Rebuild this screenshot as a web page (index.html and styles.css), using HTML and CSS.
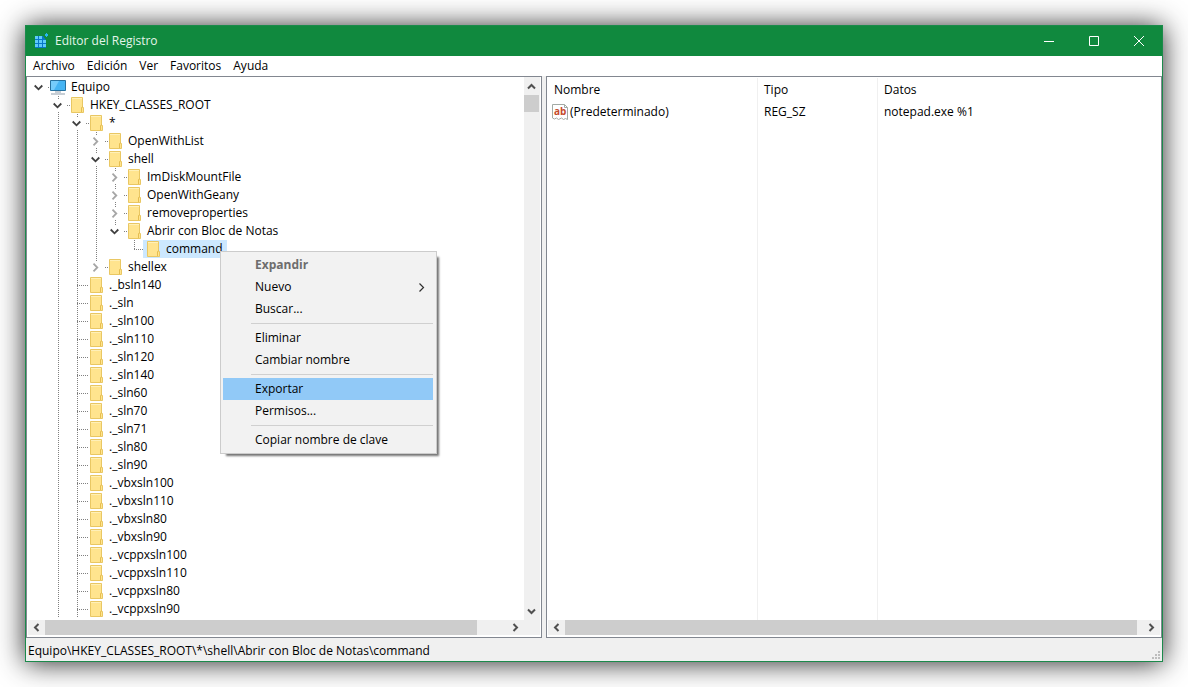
FILE: index.html
```html
<!DOCTYPE html>
<html lang="es">
<head>
<meta charset="utf-8">
<meta name="viewport" content="width=device-width, initial-scale=1">
<title>Editor del Registro</title>
<link rel="stylesheet" href="styles.css">
</head>
<body>
<svg class="defs" aria-hidden="true">
  <symbol id="folder" viewBox="0 0 13 16">
    <path d="M.5.5h11v10h1v5H.5z" fill="#ffe48e" stroke="#e9c763"/>
    <path d="M1 1h10v1H1z" fill="#fff0b8"/>
    <path d="M10.500 15v-4.500l1.500-1" fill="none" stroke="#e6be50"/>
  </symbol>
  <symbol id="down" viewBox="0 0 9 9"><path d="M.7 2.500l3.800 3.800 3.800-3.800" fill="none" stroke="#404040" stroke-width="1.800"/></symbol>
  <symbol id="closed" viewBox="0 0 9 9"><path d="M2.500.7l3.800 3.800-3.800 3.800" fill="none" stroke="#a6a6a6" stroke-width="1.800"/></symbol>
  <symbol id="arrow" viewBox="0 0 9 9"><path d="M2.500 1l3.500 3.500L2.500 8" fill="none" stroke="#505050" stroke-width="2"/></symbol>
</svg>
<main class="window">
  <header class="titlebar">
    <svg class="app-icon" viewBox="0 0 16 16" aria-hidden="true">
      <path d="M2 3h8l3 4v8H2z" fill="#0878c8"/>
      <g fill="#5fcbfa"><path d="M2 3h3v3H2zM6 3h3v3H6zM2 7h3v3H2zM6 7h3v3H6zM10 7h3v3h-3zM2 11h3v3H2zM6 11h3v3H6zM10 11h3v3h-3z"/><path d="M12 1h1V0h1v1h1v2h-1v1h-1V3h-1z" fill="#29b6ee"/></g>
    </svg>
    <h1 class="title">Editor del Registro</h1>
    <div class="controls">
      <button class="control" aria-label="Minimizar"><svg viewBox="0 0 10 10"><path d="M0 5.500h10"/></svg></button>
      <button class="control" aria-label="Maximizar"><svg viewBox="0 0 10 10"><path d="M.5.5h9v9h-9z"/></svg></button>
      <button class="control" aria-label="Cerrar"><svg viewBox="0 0 10 10"><path d="M0 0l10 10M10 0L0 10"/></svg></button>
    </div>
  </header>
  <nav class="menubar">
    <button class="menu">Archivo</button><button class="menu">Edición</button><button class="menu">Ver</button><button class="menu">Favoritos</button><button class="menu">Ayuda</button>
  </nav>
  <div class="panes">
    <section class="pane tree-pane" aria-label="Claves">
      <div class="tree-view">
        <ul class="tree root">
          <li>
            <div class="row"><button class="toggle" aria-label="Contraer Equipo"><svg><use href="#down"/></svg></button><span class="item"><svg class="computer" viewBox="0 0 16 15" aria-hidden="true"><path d="M.5.5h15v10H.5z" fill="#45b4f3" stroke="#26719f"/><path d="M1 1h8L4 10H1z" fill="#75ccfb"/><path d="M5 12h6M1 14h14" stroke="#8f9dab"/></svg>Equipo</span></div>
            <ul class="tree">
              <li class="continues">
                <div class="row"><button class="toggle" aria-label="Contraer HKEY_CLASSES_ROOT"><svg><use href="#down"/></svg></button><span class="item"><svg class="folder"><use href="#folder"/></svg>HKEY_CLASSES_ROOT</span></div>
                <ul class="tree">
                  <li>
                    <div class="row"><button class="toggle" aria-label="Contraer *"><svg><use href="#down"/></svg></button><span class="item"><svg class="folder"><use href="#folder"/></svg>*</span></div>
                    <ul class="tree">
                      <li><div class="row"><button class="toggle" aria-label="Expandir OpenWithList"><svg><use href="#closed"/></svg></button><span class="item"><svg class="folder"><use href="#folder"/></svg>OpenWithList</span></div></li>
                      <li>
                        <div class="row"><button class="toggle" aria-label="Contraer shell"><svg><use href="#down"/></svg></button><span class="item"><svg class="folder"><use href="#folder"/></svg>shell</span></div>
                        <ul class="tree">
                          <li><div class="row"><button class="toggle" aria-label="Expandir ImDiskMountFile"><svg><use href="#closed"/></svg></button><span class="item"><svg class="folder"><use href="#folder"/></svg>ImDiskMountFile</span></div></li>
                          <li><div class="row"><button class="toggle" aria-label="Expandir OpenWithGeany"><svg><use href="#closed"/></svg></button><span class="item"><svg class="folder"><use href="#folder"/></svg>OpenWithGeany</span></div></li>
                          <li><div class="row"><button class="toggle" aria-label="Expandir removeproperties"><svg><use href="#closed"/></svg></button><span class="item"><svg class="folder"><use href="#folder"/></svg>removeproperties</span></div></li>
                          <li>
                            <div class="row"><button class="toggle" aria-label="Contraer Abrir con Bloc de Notas"><svg><use href="#down"/></svg></button><span class="item"><svg class="folder"><use href="#folder"/></svg>Abrir con Bloc de Notas</span></div>
                            <ul class="tree">
                              <li><div class="row leaf"><span class="item selected"><svg class="folder"><use href="#folder"/></svg>command</span></div></li>
                            </ul>
                          </li>
                        </ul>
                      </li>
                      <li><div class="row"><button class="toggle" aria-label="Expandir shellex"><svg><use href="#closed"/></svg></button><span class="item"><svg class="folder"><use href="#folder"/></svg>shellex</span></div></li>
                    </ul>
                  </li>
                  <li><div class="row leaf"><span class="item"><svg class="folder"><use href="#folder"/></svg>._bsln140</span></div></li>
                  <li><div class="row leaf"><span class="item"><svg class="folder"><use href="#folder"/></svg>._sln</span></div></li>
                  <li><div class="row leaf"><span class="item"><svg class="folder"><use href="#folder"/></svg>._sln100</span></div></li>
                  <li><div class="row leaf"><span class="item"><svg class="folder"><use href="#folder"/></svg>._sln110</span></div></li>
                  <li><div class="row leaf"><span class="item"><svg class="folder"><use href="#folder"/></svg>._sln120</span></div></li>
                  <li><div class="row leaf"><span class="item"><svg class="folder"><use href="#folder"/></svg>._sln140</span></div></li>
                  <li><div class="row leaf"><span class="item"><svg class="folder"><use href="#folder"/></svg>._sln60</span></div></li>
                  <li><div class="row leaf"><span class="item"><svg class="folder"><use href="#folder"/></svg>._sln70</span></div></li>
                  <li><div class="row leaf"><span class="item"><svg class="folder"><use href="#folder"/></svg>._sln71</span></div></li>
                  <li><div class="row leaf"><span class="item"><svg class="folder"><use href="#folder"/></svg>._sln80</span></div></li>
                  <li><div class="row leaf"><span class="item"><svg class="folder"><use href="#folder"/></svg>._sln90</span></div></li>
                  <li><div class="row leaf"><span class="item"><svg class="folder"><use href="#folder"/></svg>._vbxsln100</span></div></li>
                  <li><div class="row leaf"><span class="item"><svg class="folder"><use href="#folder"/></svg>._vbxsln110</span></div></li>
                  <li><div class="row leaf"><span class="item"><svg class="folder"><use href="#folder"/></svg>._vbxsln80</span></div></li>
                  <li><div class="row leaf"><span class="item"><svg class="folder"><use href="#folder"/></svg>._vbxsln90</span></div></li>
                  <li><div class="row leaf"><span class="item"><svg class="folder"><use href="#folder"/></svg>._vcppxsln100</span></div></li>
                  <li><div class="row leaf"><span class="item"><svg class="folder"><use href="#folder"/></svg>._vcppxsln110</span></div></li>
                  <li><div class="row leaf"><span class="item"><svg class="folder"><use href="#folder"/></svg>._vcppxsln80</span></div></li>
                  <li class="continues"><div class="row leaf"><span class="item"><svg class="folder"><use href="#folder"/></svg>._vcppxsln90</span></div></li>
                </ul>
              </li>
            </ul>
          </li>
        </ul>
      </div>
      <div class="scrollbar vertical">
        <button class="scroll-button up" aria-label="Subir"><svg><use href="#arrow"/></svg></button>
        <div class="thumb"></div>
        <button class="scroll-button end down" aria-label="Bajar"><svg><use href="#arrow"/></svg></button>
      </div>
      <div class="scrollbar horizontal">
        <button class="scroll-button left" aria-label="Izquierda"><svg><use href="#arrow"/></svg></button>
        <div class="thumb tree-thumb"></div>
        <button class="scroll-button end" aria-label="Derecha"><svg><use href="#arrow"/></svg></button>
      </div>
      <div class="corner"></div>
    </section>
    <section class="pane value-pane" aria-label="Valores">
      <div class="value-view">
        <table class="values">
          <thead><tr><th class="name">Nombre</th><th class="type">Tipo</th><th>Datos</th></tr></thead>
          <tbody>
            <tr><td class="name"><span class="value-name"><svg class="string-icon" viewBox="0 0 16 16" aria-hidden="true"><path d="M.5.5h12l3 3v12l-2-1-2 1-2-1.500-3 1.500-2-1.500-2 1-2-1z" fill="#fff" stroke="#a3aaa5"/><path d="M12.500.5v3h3" fill="none" stroke="#a3aaa5"/><text x="2" y="11" class="ab">ab</text></svg>(Predeterminado)</span></td><td>REG_SZ</td><td>notepad.exe %1</td></tr>
            <tr class="rest"><td></td><td></td><td></td></tr>
          </tbody>
        </table>
      </div>
      <div class="scrollbar horizontal">
        <button class="scroll-button left" aria-label="Izquierda"><svg><use href="#arrow"/></svg></button>
        <div class="thumb value-thumb"></div>
        <button class="scroll-button end" aria-label="Derecha"><svg><use href="#arrow"/></svg></button>
      </div>
    </section>
  </div>
  <footer class="status"><span>Equipo\HKEY_CLASSES_ROOT\*\shell\Abrir con Bloc de Notas\command</span>
    <svg class="grip" viewBox="0 0 8 8" aria-hidden="true"><path d="M6 0h2v2H6zM3 3h2v2H3zM6 3h2v2H6zM0 6h2v2H0zM3 6h2v2H3zM6 6h2v2H6z"/></svg>
  </footer>
</main>
<div class="context" role="menu">
  <button class="command default" role="menuitem" disabled>Expandir</button>
  <button class="command" role="menuitem">Nuevo<svg class="submenu" viewBox="0 0 9 9"><path d="M2.500.5l4 4-4 4" fill="none" stroke="#303030" stroke-width="1.200"/></svg></button>
  <button class="command" role="menuitem">Buscar...</button>
  <hr class="separator">
  <button class="command" role="menuitem">Eliminar</button>
  <button class="command" role="menuitem">Cambiar nombre</button>
  <hr class="separator">
  <button class="command active" role="menuitem">Exportar</button>
  <button class="command" role="menuitem">Permisos...</button>
  <hr class="separator">
  <button class="command" role="menuitem">Copiar nombre de clave</button>
</div>
</body>
</html>
```
FILE: styles.css
```css
* { box-sizing: border-box; }

body {
  margin: 0;
  height: 100vh;
  padding: 25px;
  background: #fff;
  color: #000;
  font: 12px/18px "Open Sans", "Noto Sans", sans-serif;
  overflow: hidden;
}

button {
  border: 0;
  padding: 0;
  background: none;
  color: inherit;
  font: inherit;
}

svg { display: block; flex: none; }
.defs { position: absolute; width: 0; height: 0; }

.window {
  height: 100%;
  display: flex;
  flex-direction: column;
  border: 1px solid #1b8a4b;
  background: #f0f0f0;
  box-shadow: 0 1px 26px rgba(0, 0, 0, .85);
}

.titlebar {
  height: 30px;
  flex: none;
  display: flex;
  align-items: center;
  padding-left: 7px;
  background: #10893e;
  color: #e4f5ea;
}
.app-icon { width: 16px; height: 16px; }
.title { margin: 0 0 0 6px; font-size: 12px; font-weight: 400; }
.controls { display: flex; margin-left: auto; padding-right: 1px; }
.control { width: 45px; height: 28px; display: grid; place-items: center; }
.control svg { width: 10px; height: 10px; fill: none; stroke: #fff; }

.menubar { display: flex; flex: none; height: 20px; padding-left: 1px; background: #fff; }
.menu { padding: 0 6px; line-height: 20px; }

.panes {
  flex: 1;
  min-height: 0;
  display: grid;
  grid-template-columns: 516fr 616fr;
  column-gap: 4px;
}
.pane {
  min-width: 0;
  min-height: 0;
  display: grid;
  grid-template-rows: minmax(0, 1fr) 15px;
  padding: 0 1px 2px;
  border: 1px solid #828790;
  background: #fff;
}
.tree-pane { grid-template-columns: minmax(0, 1fr) 16px; }
.tree-view { overflow: hidden; padding-top: 1px; }

.tree { list-style: none; margin: 0; padding: 0 0 0 19px; }
.root { padding-left: 1px; }
.tree li {
  background: repeating-linear-gradient(#808080 0 1px, transparent 1px 2px) 10px 0 / 1px 100% no-repeat;
}
.tree li:last-child:not(.continues) { background-size: 1px 10px; }
.root > li { background: none; }
.row { display: flex; align-items: center; height: 18px; white-space: nowrap; }
.leaf {
  padding-left: 19px;
  background: repeating-linear-gradient(90deg, #808080 0 1px, transparent 1px 2px) 10px 9px / 12px 1px no-repeat;
}
.toggle { width: 19px; height: 12px; display: grid; place-items: center; background: #fff; }
.toggle svg { width: 9px; height: 9px; }
.toggle + .item {
  background: repeating-linear-gradient(90deg, #808080 0 1px, transparent 1px 2px) 0 9px / 3px 1px no-repeat;
}
.item { display: flex; align-items: center; height: 18px; padding: 0 4px; }
.selected { background: #cce8ff; }
.folder { width: 13px; height: 16px; margin-right: 6px; }
.computer { width: 16px; height: 15px; margin: 0 5px 0 -2px; }

.scrollbar { display: flex; background: #f0f0f0; }
.vertical { flex-direction: column; padding-top: 1px; }
.scroll-button { width: 17px; height: 15px; flex: none; display: grid; place-items: center; }
.vertical .scroll-button { width: 15px; height: 17px; }
.scroll-button svg { width: 9px; height: 9px; }
.up svg { transform: rotate(-90deg); }
.down svg { transform: rotate(90deg); }
.left svg { transform: rotate(180deg); }
.end { margin-left: auto; }
.vertical .end { margin: auto 0 0; }
.thumb { background: #cdcdcd; }
.vertical .thumb { width: 15px; height: 17px; }
.tree-thumb { width: 87%; }
.value-thumb { flex: 1; margin-right: 6px; }
.corner { background: #f0f0f0; }

.value-view { padding-top: 1px; min-height: 0; }
.values {
  width: 100%;
  height: 100%;
  table-layout: fixed;
  border-collapse: separate;
  border-spacing: 0;
}
.values th, .values td {
  height: 20px;
  padding: 0 6px;
  border-right: 1px solid #f0f0f0;
  font-weight: 400;
  text-align: left;
  white-space: nowrap;
}
.values th { height: 24px; }
.values th:last-child, .values td:last-child { border-right: 0; }
.values .name { width: 210px; }
.values .type { width: 120px; }
.values td.name { padding-left: 4px; }
.values .rest td { height: auto; }
.value-name { display: flex; align-items: center; gap: 2px; }
.string-icon { width: 16px; height: 16px; overflow: visible; }
.ab { font: 700 10px "Open Sans", sans-serif; fill: #c54b2c; }

.status {
  flex: none;
  display: flex;
  align-items: center;
  justify-content: space-between;
  height: 23px;
  padding: 2px 2px 0;
}
.grip { width: 8px; height: 8px; align-self: flex-end; margin-bottom: 2px; fill: #bdbdbd; }

.context {
  position: absolute;
  left: 220px;
  top: 251px;
  width: 217px;
  padding: 2px 3px 2px 2px;
  border: 1px solid #ccc;
  background: #f2f2f2;
  box-shadow: 4px 4px 2px -2px rgba(0, 0, 0, .55);
}
.command {
  display: flex;
  align-items: center;
  width: 100%;
  height: 22px;
  padding: 0 7px 0 32px;
  text-align: left;
}
.submenu { width: 9px; height: 9px; margin-left: auto; }
.default { color: #6d6d6d; font-weight: 700; }
.active { background: #91c9f7; }
.separator { height: 1px; margin: 3px 0 3px 28px; border: 0; background: #d0d0d0; }
```
